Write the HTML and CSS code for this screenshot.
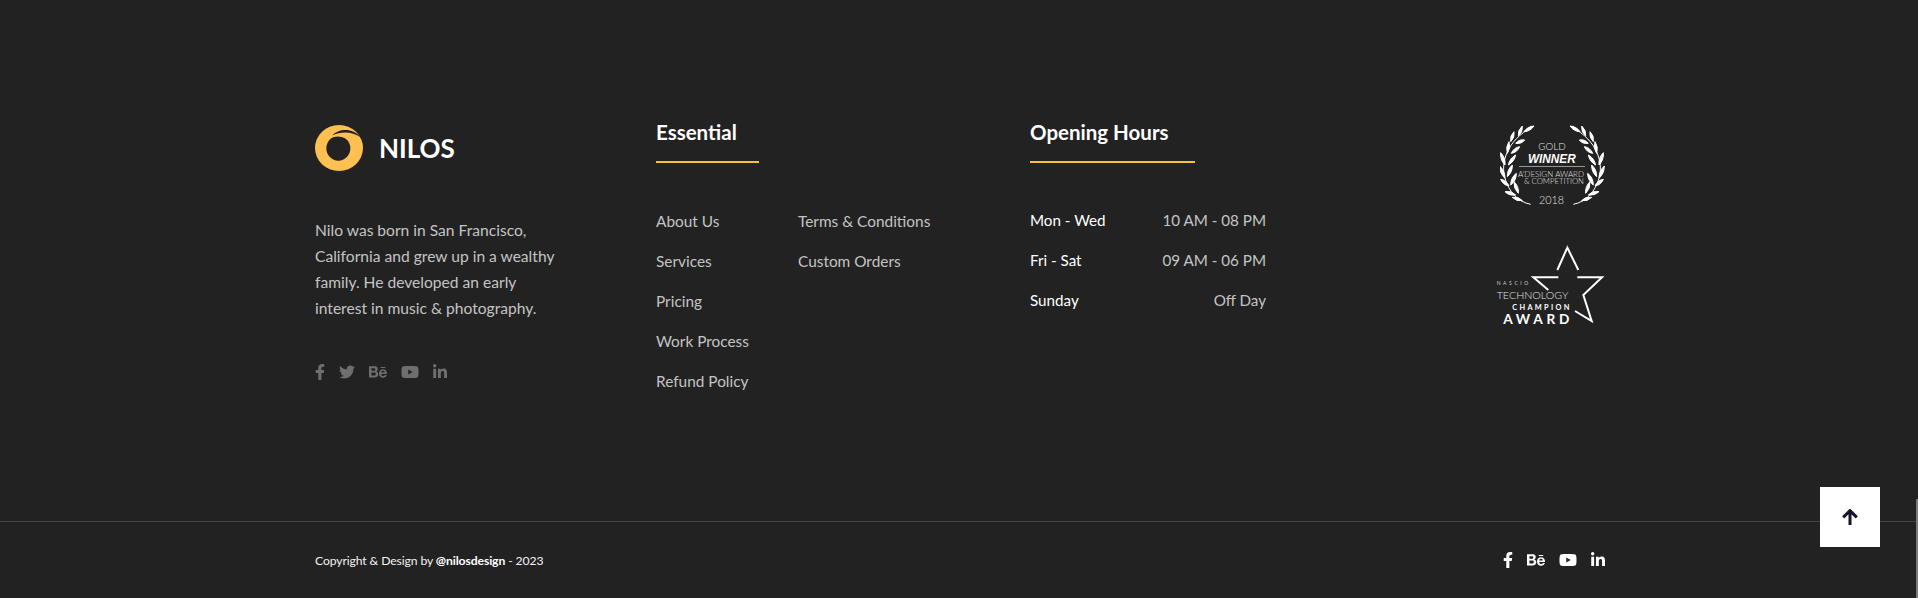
FILE: index.html
```html
<!DOCTYPE html>
<html lang="en">
<head>
<meta charset="utf-8">
<title>Nilos footer</title>
<link rel="stylesheet" href="styles.css">
</head>
<body>
<svg class="defs" aria-hidden="true">
  <symbol id="i-f" viewBox="0 0 320 512"><path d="M279.14 288l14.22-92.66h-88.91v-60.13c0-25.35 12.42-50.06 52.24-50.06h40.42V6.26S260.43 0 225.36 0c-73.22 0-121.08 44.38-121.08 124.72v70.62H22.89V288h81.39v224h100.17V288z"/></symbol>
  <symbol id="i-t" viewBox="0 0 512 512"><path d="M459.37 151.716c.325 4.548.325 9.097.325 13.645 0 138.72-105.583 298.558-298.558 298.558-59.452 0-114.68-17.219-161.137-47.106 8.447.974 16.568 1.299 25.34 1.299 49.055 0 94.213-16.568 130.274-44.832-46.132-.975-84.792-31.188-98.112-72.772 6.498.974 12.995 1.624 19.818 1.624 9.421 0 18.843-1.3 27.614-3.573-48.081-9.747-84.143-51.98-84.143-102.985v-1.299c13.969 7.797 30.214 12.67 47.431 13.319-28.264-18.843-46.781-51.005-46.781-87.391 0-19.492 5.197-37.36 14.294-52.954 51.655 63.675 129.3 105.258 216.365 109.807-1.624-7.797-2.599-15.918-2.599-24.04 0-57.828 46.782-104.934 104.934-104.934 30.213 0 57.502 12.67 76.67 33.137 23.715-4.548 46.456-13.32 66.599-25.34-7.798 24.366-24.366 44.833-46.132 57.827 21.117-2.273 41.584-8.122 60.426-16.243-14.292 20.791-32.161 39.308-52.628 54.253z"/></symbol>
  <symbol id="i-b" viewBox="0 0 576 512"><path d="M232 237.2c31.8-15.2 48.4-38.2 48.4-74 0-70.6-52.6-87.8-113.3-87.8H0v354.4h171.8c64.4 0 124.9-30.9 124.9-102.9 0-44.5-21.1-77.4-64.7-89.7zM77.9 135.9H151c28.1 0 53.4 7.9 53.4 40.5 0 30.1-19.7 42.2-47.5 42.2h-79v-82.7zm83.3 233.7H77.9V272h84.9c34.3 0 56 14.3 56 50.6 0 35.8-25.9 47-57.6 47zm358.5-240.7H376V94h143.7v34.9zM576 305.2c0-75.9-44.4-139.2-124.9-139.2-78.2 0-131.3 58.8-131.3 135.8 0 79.9 50.3 134.7 131.3 134.7 61.3 0 101-27.6 120.1-86.3H509c-6.7 21.9-34.3 33.5-55.7 33.5-41.3 0-63-24.2-63-65.3h185.1c.3-4.2.6-8.7.6-13.2zM390.4 274c2.3-33.7 24.7-54.8 58.5-54.8 35.4 0 53.2 20.8 56.2 54.8H390.4z"/></symbol>
  <symbol id="i-y" viewBox="0 0 576 512"><path d="M549.655 124.083c-6.281-23.65-24.787-42.276-48.284-48.597C458.781 64 288 64 288 64S117.22 64 74.629 75.486c-23.497 6.322-42.003 24.947-48.284 48.597-11.412 42.867-11.412 132.305-11.412 132.305s0 89.438 11.412 132.305c6.281 23.65 24.787 41.5 48.284 47.821C117.22 448 288 448 288 448s170.78 0 213.371-11.486c23.497-6.321 42.003-24.171 48.284-47.821 11.412-42.867 11.412-132.305 11.412-132.305s0-89.438-11.412-132.305zm-317.51 213.508V175.185l142.739 81.205-142.739 81.201z"/></symbol>
  <symbol id="i-l" viewBox="0 0 448 512"><path d="M100.28 448H7.4V148.9h92.88zM53.79 108.1C24.09 108.1 0 83.5 0 53.8a53.79 53.79 0 0 1 107.58 0c0 29.7-24.1 54.3-53.79 54.3zM447.9 448h-92.68V302.4c0-34.7-.7-79.2-48.29-79.2-48.29 0-55.69 37.7-55.69 76.7V448h-92.78V148.9h89.08v40.8h1.3c12.4-23.5 42.69-48.3 87.88-48.3 94 0 111.28 61.9 111.28 142.3V448z"/></symbol>
  <g id="branch">
    <path class="stem" d="M155 283C115 275 90 245 78 205C65 160 80 95 160 50"/>
    <path d="M135 65Q154 64 165 48Q146 49 135 65Z"/>
    <path d="M118 78Q132 66 130 48Q116 60 118 78Z"/>
    <path d="M110 100Q127 103 137 90Q120 87 110 100Z"/>
    <path d="M95 95Q108 83 105 65Q92 77 95 95Z"/>
    <path d="M97 130Q115 127 122 110Q104 113 97 130Z"/>
    <path d="M85 130Q96 114 90 95Q79 111 85 130Z"/>
    <path d="M88 165Q106 155 110 135Q92 145 88 165Z"/>
    <path d="M78 165Q80 143 65 128Q63 150 78 165Z"/>
    <path d="M85 200Q101 186 100 165Q84 179 85 200Z"/>
    <path d="M78 205Q78 183 62 168Q62 190 78 205Z"/>
    <path d="M95 225Q112 212 112 190Q95 203 95 225Z"/>
    <path d="M90 228Q83 211 65 208Q72 225 90 228Z"/>
    <path d="M118 250Q120 229 105 215Q103 235 118 250Z"/>
    <path d="M110 255Q97 241 78 245Q91 258 110 255Z"/>
    <path d="M130 272Q118 258 100 262Q112 275 130 272Z"/>
  </g>
</svg>

<footer class="footer">
  <div class="footer-main">
    <section class="about">
      <a class="brand">
        <svg class="brand-mark" viewBox="45 45 144 138">
          <ellipse class="mark-gold" cx="117" cy="114" rx="72" ry="69"/>
          <ellipse class="mark-hole" cx="115" cy="115" rx="36" ry="37"/>
          <path class="mark-gold" d="M96 82C110 64 142 64 153 104C146 88 128 74 96 82Z"/>
          <path class="mark-hole" d="M98 76C114 56 160 52 181 82C160 66 125 63 98 76Z"/>
        </svg>
        <span class="brand-name">NILOS</span>
      </a>
      <p class="about-text">Nilo was born in San Francisco, California and grew up in a wealthy family. He developed an early interest in music &amp; photography.</p>
      <div class="social social-muted">
        <svg class="ico w10"><use href="#i-f"/></svg>
        <svg class="ico w16"><use href="#i-t"/></svg>
        <svg class="ico w18"><use href="#i-b"/></svg>
        <svg class="ico w18"><use href="#i-y"/></svg>
        <svg class="ico w14"><use href="#i-l"/></svg>
      </div>
    </section>

    <section class="links">
      <h3 class="col-title">Essential</h3>
      <div class="title-rule rule-short"></div>
      <ul class="link-grid">
        <li>About Us</li>
        <li>Terms &amp; Conditions</li>
        <li>Services</li>
        <li>Custom Orders</li>
        <li>Pricing</li>
        <li class="empty"></li>
        <li>Work Process</li>
        <li class="empty"></li>
        <li>Refund Policy</li>
      </ul>
    </section>

    <section class="hours">
      <h3 class="col-title">Opening Hours</h3>
      <div class="title-rule rule-long"></div>
      <ul class="hour-list">
        <li><span class="day">Mon - Wed</span><span>10 AM - 08 PM</span></li>
        <li><span class="day">Fri - Sat</span><span>09 AM - 06 PM</span></li>
        <li><span class="day">Sunday</span><span>Off Day</span></li>
      </ul>
    </section>

    <aside class="awards">
      <svg class="award-gold" viewBox="63 45 315 240">
        <use href="#branch" class="laurel"/>
        <use href="#branch" class="laurel" transform="translate(438 0) scale(-1 1)"/>
        <text class="a-thin a-gold" x="178" y="120" textLength="82" lengthAdjust="spacingAndGlyphs">GOLD</text>
        <text class="a-winner" x="147" y="158" textLength="143" lengthAdjust="spacingAndGlyphs">WINNER</text>
        <rect class="a-line" x="120" y="169" width="198" height="2"/>
        <text class="a-thin a-small" x="117" y="200" textLength="198" lengthAdjust="spacingAndGlyphs">A'DESIGN AWARD</text>
        <text class="a-thin a-small" x="135" y="221" textLength="180" lengthAdjust="spacingAndGlyphs">&amp; COMPETITION</text>
        <text class="a-thin a-year" x="180" y="282" textLength="75" lengthAdjust="spacingAndGlyphs">2018</text>
      </svg>
      <svg class="award-star" viewBox="48 30 327 240">
        <path class="star" d="M232 105L262 38L295 105M292 127H366L310 180L335 258L285 228M235 127H160L205 165"/>
        <text class="s-nascio" x="50" y="151" textLength="95">NASCIO</text>
        <text class="s-tech" x="50" y="191" textLength="215" lengthAdjust="spacingAndGlyphs">TECHNOLOGY</text>
        <text class="s-champ" x="97" y="226" textLength="171">CHAMPION</text>
        <text class="s-award" x="70" y="268" textLength="198">AWARD</text>
      </svg>
    </aside>
  </div>

  <div class="footer-bottom">
    <p class="copy">Copyright &amp; Design by <b>@nilosdesign</b> - 2023</p>
    <div class="social social-bright">
      <svg class="ico w10"><use href="#i-f"/></svg>
      <svg class="ico w18"><use href="#i-b"/></svg>
      <svg class="ico w18"><use href="#i-y"/></svg>
      <svg class="ico w14"><use href="#i-l"/></svg>
    </div>
  </div>
</footer>

<a class="to-top" aria-label="Back to top">
  <svg class="to-top-arrow" viewBox="0 0 16 16"><path d="M8 16V2M1.2 8.4L8 1.6L14.8 8.4"/></svg>
</a>
<div class="scroll-thumb"></div>
</body>
</html>
```

FILE: styles.css
```css
* { box-sizing: border-box; }
html, body { margin: 0; padding: 0; height: 100%; overflow: hidden; }
body {
  background: #222222;
  color: #c4c4c4;
  font-family: "Lato", "Open Sans", sans-serif;
  font-size: 16px;
}
.defs { display: none; }
ul { list-style: none; margin: 0; padding: 0; }
p { margin: 0; }

.footer { height: 598px; display: flex; flex-direction: column; }
.footer-main {
  width: 1290px;
  height: 521px;
  margin-left: 315px;
  padding-top: 125px;
  display: grid;
  grid-template-columns: 341px 374px 236px 1fr;
  align-items: start;
}

/* brand column */
.brand { display: flex; align-items: center; gap: 16px; height: 46px; }
.brand-mark { width: 48px; height: 46px; display: block; }
.mark-gold { fill: #ffc052; }
.mark-hole { fill: #222222; }
.brand-name { color: #fff; font-size: 26px; font-weight: 700; line-height: 46px; }
.about-text { width: 250px; margin-top: 46px; line-height: 26px; font-size: 15.6px; color: #c4c4c4; }

.social { display: flex; align-items: center; }
.ico { display: block; height: 16px; fill: currentColor; }
.w10 { width: 10px; }
.w14 { width: 14px; }
.w16 { width: 16px; }
.w18 { width: 18px; }
.social-muted { margin-top: 43px; gap: 14px; color: #6f6f6f; height: 16px; }
.social-bright { gap: 14px; color: #fff; }

/* column headings */
.col-title { margin: 0; color: #fff; font-size: 20.5px; font-weight: 700; line-height: 14px; }
.title-rule { height: 2px; background: #ffc034; margin-top: 22px; }
.rule-short { width: 103px; }
.rule-long { width: 165px; }

/* links */
.link-grid {
  display: grid;
  grid-template-columns: 142px 1fr;
  grid-auto-rows: 40px;
  margin-top: 38px;
  font-size: 15.4px;
  line-height: 40px;
  color: #c4c4c4;
}

/* hours */
.hour-list { margin-top: 37px; font-size: 15.2px; }
.hour-list li { display: flex; justify-content: space-between; height: 40px; line-height: 40px; color: #c4c4c4; }
.day { color: #fff; }

/* awards */
.awards { display: flex; flex-direction: column; align-items: flex-end; gap: 40px; }
.award-gold { width: 105px; height: 80px; display: block; }
.award-star { width: 109px; height: 80px; display: block; }
.laurel { fill: #fff; stroke: #fff; stroke-width: 3; stroke-linejoin: round; }
.stem { fill: none; stroke: #fff; stroke-width: 3; }
.a-thin { fill: #e0e0e0; stroke: none; font-family: "Lato", sans-serif; font-weight: 300; }
.a-gold { font-size: 27px; }
.a-small { font-size: 21px; }
.a-year { font-size: 32px; }
.a-winner { fill: #fff; font-family: "Liberation Sans", sans-serif; font-weight: 700; font-style: italic; font-size: 39px; }
.a-line { fill: #cfcfcf; }
.star { fill: none; stroke: #fff; stroke-width: 6; }
.s-nascio { fill: #d0d0d0; font-family: "Lato", sans-serif; font-size: 15px; }
.s-tech { fill: #e0e0e0; font-family: "Lato", sans-serif; font-weight: 300; font-size: 28px; }
.s-champ { fill: #fff; font-family: "Lato", sans-serif; font-weight: 700; font-size: 22px; }
.s-award { fill: #fff; font-family: "Lato", sans-serif; font-weight: 700; font-size: 41px; }

/* bottom bar */
.footer-bottom {
  border-top: 1px solid #444444;
  flex: 1;
  display: flex;
  justify-content: space-between;
  align-items: center;
  padding: 0 313px 0 315px;
}
.copy { color: #f2f2f2; font-size: 12.2px; letter-spacing: -0.12px; }
.copy b { color: #fff; font-weight: 700; }

/* overlay controls */
.to-top {
  position: fixed;
  left: 1820px;
  top: 487px;
  width: 60px;
  height: 60px;
  background: #fff;
  display: flex;
  align-items: center;
  justify-content: center;
}
.to-top-arrow { width: 16px; height: 16px; fill: none; stroke: #14142b; stroke-width: 3; }
.scroll-thumb {
  position: fixed;
  right: 0;
  top: 499px;
  width: 2px;
  height: 99px;
  background: #7a7a7a;
}
```
